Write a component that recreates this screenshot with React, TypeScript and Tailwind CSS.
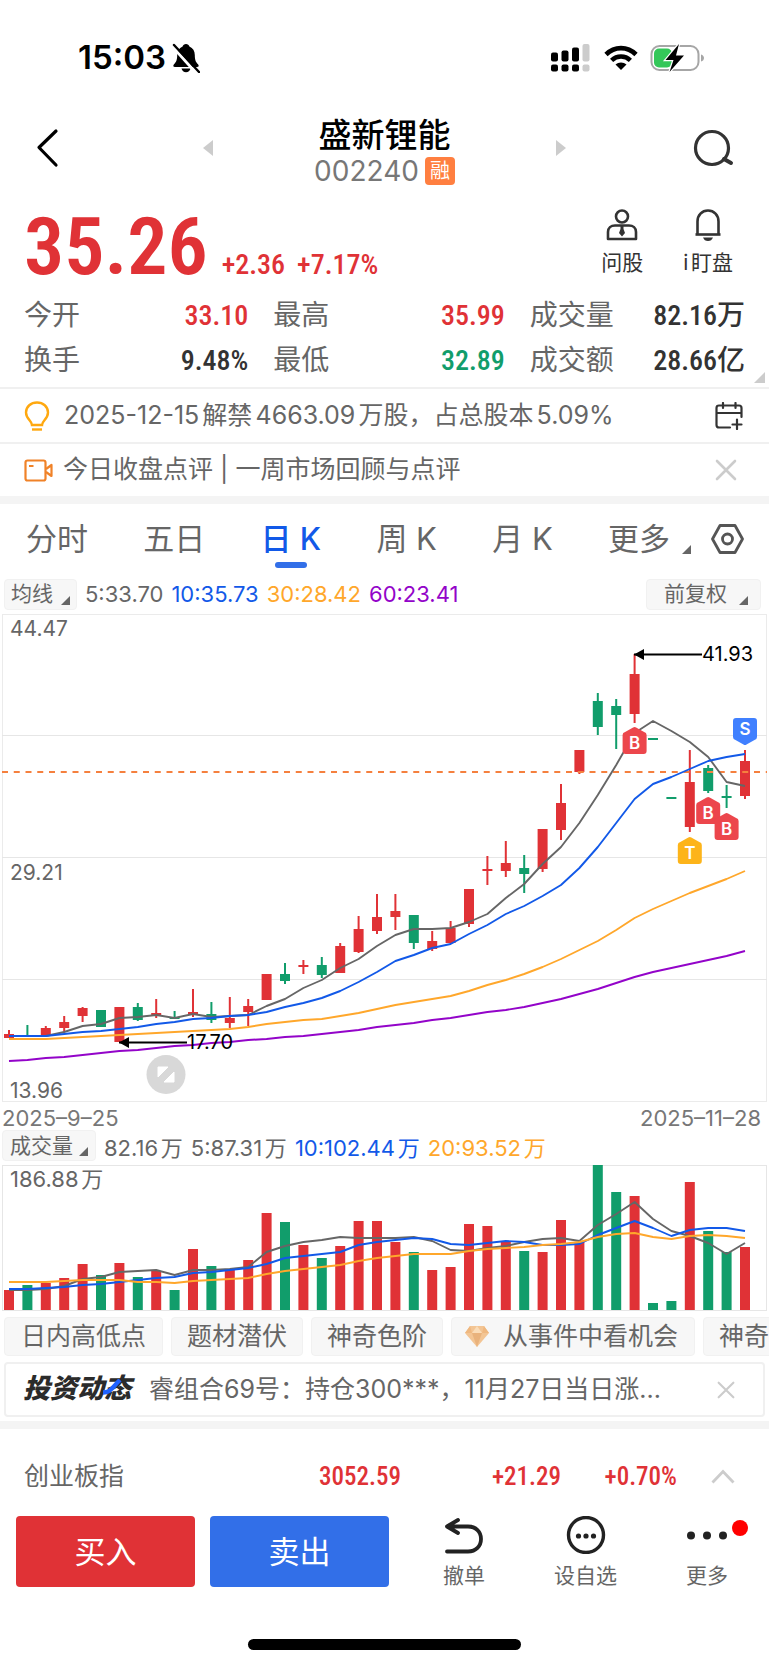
import React from 'react';

const RED = '#e03236';
const GREEN = '#119d6b';
const BLUE = '#1259e8';
const ORANGE = '#ffa72b';
const PURPLE = '#9304c9';
const GRAY = '#666666';

// [direction, high, body top, body bottom, low, volume top]
type Candle = [1 | -1, number, number, number, number, number];

const candles: Candle[] = [
  [1, 416, 420, 424, 424, 125],
  [-1, 411, 421, 422, 422, 120],
  [1, 412, 414, 422, 422, 118],
  [1, 402, 408, 414, 418, 113],
  [1, 393, 394, 402, 408, 99],
  [-1, 396, 396, 413, 413, 110],
  [1, 393, 393, 428, 428, 98],
  [-1, 389, 393, 406, 407, 112],
  [1, 385, 399, 402, 404, 106],
  [-1, 397, 403, 405, 405, 125],
  [1, 375, 398, 401, 403, 84],
  [-1, 388, 400, 406, 409, 101],
  [1, 383, 404, 409, 414, 104],
  [1, 385, 392, 398, 412, 95],
  [1, 360, 360, 386, 386, 48],
  [-1, 349, 360, 367, 370, 57],
  [1, 346, 351, 353, 360, 80],
  [-1, 343, 351, 361, 364, 93],
  [1, 329, 332, 359, 359, 81],
  [1, 302, 315, 338, 339, 56],
  [1, 280, 303, 317, 320, 56],
  [1, 280, 297, 303, 316, 77],
  [-1, 301, 301, 329, 335, 87],
  [1, 317, 327, 335, 337, 105],
  [1, 307, 314, 329, 329, 102],
  [1, 275, 275, 310, 313, 59],
  [1, 242, 255, 257, 271, 61],
  [1, 227, 249, 257, 263, 77],
  [-1, 241, 254, 260, 279, 86],
  [1, 215, 215, 255, 258, 87],
  [1, 170, 189, 216, 226, 55],
  [1, 136, 136, 158, 160, 77],
  [-1, 79, 87, 113, 121, 0],
  [-1, 85, 92, 101, 135, 27],
  [1, 40, 60, 100, 109, 31],
  [-1, 124, 124, 126, 126, 138],
  [-1, 183, 183, 185, 185, 136],
  [1, 136, 168, 213, 218, 17],
  [-1, 151, 154, 177, 179, 66],
  [-1, 171, 182, 184, 194, 87],
  [1, 136, 147, 182, 185, 82],
];

const ma5 = [422, 422, 422, 418, 412, 410, 404, 403, 401, 404, 400, 403, 402, 401, 392, 385, 374, 366, 354, 345, 332, 321, 315, 315, 314, 308, 300, 284, 270, 250, 233, 209, 181, 151, 119, 107, 117, 128, 143, 168, 172];
const ma10 = [422, 422, 422, 420, 418, 417, 415, 413, 410, 408, 405, 404, 402, 401, 398, 393, 389, 384, 377, 368, 358, 347, 341, 334, 330, 320, 311, 300, 292, 282, 271, 254, 233, 209, 185, 170, 163, 155, 147, 143, 140];
const ma30 = [425, 425, 425, 424, 423, 422, 421, 420, 419, 418, 417, 416, 415, 413, 410, 408, 406, 405, 402, 399, 395, 391, 388, 385, 382, 377, 371, 366, 360, 353, 345, 336, 327, 316, 304, 295, 287, 279, 272, 265, 257];
const ma60 = [447, 446, 444, 443, 441, 439, 437, 436, 434, 432, 431, 429, 428, 426, 425, 423, 422, 420, 418, 416, 413, 411, 409, 406, 404, 401, 398, 396, 393, 389, 385, 380, 375, 369, 363, 358, 354, 350, 346, 342, 337];

const vol5 = [125, 125, 124, 121, 114, 112, 107, 106, 105, 110, 105, 105, 104, 102, 87, 81, 77, 75, 72, 73, 73, 73, 72, 76, 85, 86, 83, 81, 77, 74, 73, 76, 60, 49, 37, 54, 66, 71, 78, 89, 78];
const vol10 = [124, 124, 123, 122, 120, 119, 117, 115, 113, 112, 108, 107, 105, 103, 99, 93, 91, 89, 87, 80, 77, 75, 73, 74, 79, 80, 78, 76, 77, 80, 80, 79, 70, 63, 56, 63, 71, 65, 63, 63, 66];
const vol20 = [117, 117, 117, 116, 115, 115, 115, 117, 117, 118, 116, 115, 114, 113, 109, 106, 104, 102, 100, 96, 93, 91, 89, 89, 89, 86, 84, 83, 82, 80, 79, 77, 72, 69, 68, 72, 74, 71, 70, 71, 73];

const xAt = (i: number) => 7 + i * 18.4;
const line = (ys: number[]) => ys.map((y, i) => `${xAt(i).toFixed(1)},${y}`).join(' ');

const Corner = () => (
  <svg width="9" height="9" viewBox="0 0 9 9" className="mb-1 shrink-0 self-end" fill="#666">
    <path d="M9 0V9H0Z" />
  </svg>
);

const Close = ({ size }: { size: number }) => (
  <svg width={size} height={size} viewBox="0 0 22 22" stroke="#ccc" strokeWidth="2.6" strokeLinecap="round">
    <path d="M2 2L20 20M20 2L2 20" />
  </svg>
);

const Tag = ({ i, y, letter, color, down }: { i: number; y: number; letter: string; color: string; down?: boolean }) => (
  <g transform={`translate(${xAt(i)} ${y})`}>
    <path
      d={down
        ? 'M-9 0H9Q12 0 12 3V19Q12 21.500 9.500 22L1.500 26.500Q0 27.500 -1.500 26.500L-9.500 22Q-12 21.500 -12 19V3Q-12 0 -9 0Z'
        : 'M-9 27H9Q12 27 12 24V8Q12 5.500 9.500 5L1.500 .5Q0 -.5 -1.500 .5L-9.500 5Q-12 5.500 -12 8V24Q-12 27 -9 27Z'}
      fill={color}
    />
    <text y={down ? 17 : 22} textAnchor="middle" fontSize="17" fontWeight="600" fill="#fff">{letter}</text>
  </g>
);

const StatusBar = () => (
  <div className="flex h-[115px] items-center pl-[78px] pr-16">
    <span className="text-[33px] font-semibold leading-none text-black">15:03</span>
    <svg className="ml-1.5" width="28" height="30" viewBox="0 0 28 30">
      <path d="M14 1c-1.700 0-3 1.100-3.400 2.500C7 5 5.200 8 5.200 12c0 5-1 7-3.200 9.200C.8 22.500 1.200 24 3 24h22c1.800 0 2.200-1.500 1-2.800C23.800 19 22.800 17 22.800 12c0-4-1.800-7-5.400-8.500C17 2.100 15.700 1 14 1Z" fill="#000" />
      <path d="M9.500 25.500h9c-.6 2.300-2.300 3.700-4.500 3.700s-3.900-1.400-4.500-3.700Z" fill="#000" />
      <path d="M1 4L25 31" stroke="#fff" strokeWidth="3" />
      <path d="M2 2L27 29" stroke="#000" strokeWidth="2.400" strokeLinecap="round" />
    </svg>
    <svg className="ml-auto" width="39" height="28" viewBox="0 0 39 28">
      <g fill="#000">
        <rect x="0" y="8.500" width="7" height="9" rx="2" />
        <rect x="10.500" y="6.500" width="7" height="11" rx="2" />
        <rect x="21" y="3.500" width="7" height="14" rx="2" />
        <rect x="0" y="20.500" width="7" height="7" rx="2" />
        <rect x="10.500" y="20.500" width="7" height="7" rx="2" />
        <rect x="21" y="20.500" width="7" height="7" rx="2" />
      </g>
      <g fill="#ccc">
        <rect x="31.500" y="0" width="7" height="17.500" rx="2" />
        <rect x="31.500" y="20.500" width="7" height="7" rx="2" />
      </g>
    </svg>
    <svg className="ml-3.5" width="34" height="26" viewBox="0 0 34 26" fill="none" stroke="#000" strokeWidth="4.600">
      <path d="M2 9.500C10.500 1 23.500 1 32 9.500" />
      <path d="M7.600 15.300C13 10.200 21 10.200 26.400 15.300" />
      <path d="M17 25L11.500 19.500C14.500 16.800 19.500 16.800 22.500 19.500Z" fill="#000" stroke="none" />
    </svg>
    <svg className="ml-3" width="55" height="28" viewBox="0 0 55 28">
      <rect x="1.500" y="2" width="47" height="24" rx="8" fill="none" stroke="#a6a6a6" strokeWidth="2" />
      <path d="M51 10.500c2 .5 3 2 3 3.500s-1 3-3 3.500Z" fill="#a6a6a6" />
      <rect x="4" y="4.500" width="18" height="19" rx="5" fill="#34c759" />
      <path d="M29 0L15.500 16h8L19.500 28L34 11.500H26Z" fill="#000" stroke="#fff" strokeWidth="2.400" paintOrder="stroke" />
    </svg>
  </div>
);

const Header = () => (
  <header className="flex h-[66px] items-center justify-between px-9">
    <button aria-label="返回" className="w-10">
      <svg width="24" height="40" viewBox="0 0 24 40" fill="none" stroke="#000" strokeWidth="3.200" strokeLinecap="round" strokeLinejoin="round">
        <path d="M20 3L3 19.500L20 37" />
      </svg>
    </button>
    <div className="flex items-center gap-[101px]">
      <button aria-label="上一只">
        <svg width="10" height="16" viewBox="0 0 10 16" fill="#ccc"><path d="M10 0V16L0 8Z" /></svg>
      </button>
      <div className="flex flex-col items-center pt-1.5">
        <h1 className="text-[33px] font-medium leading-[40px] text-black">盛新锂能</h1>
        <div className="flex items-center gap-1.5 leading-8">
          <span className="text-[28px] leading-8 text-[#777]">002240</span>
          <span className="rounded bg-[#ff7f40] px-[5px] text-[20px] leading-7 text-white">融</span>
        </div>
      </div>
      <button aria-label="下一只">
        <svg width="10" height="16" viewBox="0 0 10 16" fill="#ccc"><path d="M0 0V16L10 8Z" /></svg>
      </button>
    </div>
    <button aria-label="搜索" className="w-10">
      <svg width="42" height="38" viewBox="0 0 42 38" fill="none" stroke="#333" strokeWidth="3.200" strokeLinecap="round">
        <circle cx="19" cy="19" r="16.500" />
        <path d="M31 30L38 34" strokeWidth="4" />
      </svg>
    </button>
  </header>
);

const stats = [
  ['今开', '33.10', 'text-[#e03236]'],
  ['最高', '35.99', 'text-[#e03236]'],
  ['成交量', '82.16万', 'text-[#333]'],
  ['换手', '9.48%', 'text-[#333]'],
  ['最低', '32.89', 'text-[#119d6b]'],
  ['成交额', '28.66亿', 'text-[#333]'],
];

const NARROW = "font-['Roboto_Condensed','Roboto','Noto_Sans_CJK_SC',sans-serif]";

const Quote = () => (
  <section className="relative h-[206px] px-6 pt-[23px]">
    <div className="flex h-[89px] justify-between">
      <div className={`flex items-baseline font-medium text-[#e03236] ${NARROW}`}>
        <span className="text-[80px] font-semibold leading-[86px]">35.26</span>
        <span className="ml-3.5 text-[28px]">+2.36</span>
        <span className="ml-3 text-[28px]">+7.17%</span>
      </div>
      <div className="flex gap-10 pr-3 pt-[5px] text-[21px] leading-7 text-[#333]">
        <button className="flex flex-col items-center gap-2">
          <svg width="32" height="32" viewBox="0 0 32 32" fill="none" stroke="#333" strokeWidth="2.600">
            <circle cx="16" cy="7.500" r="6" />
            <path d="M2 30V23C2 19 5 16.500 9 16.500H23C27 16.500 30 19 30 23V30Z" strokeLinejoin="round" />
            <path d="M14.500 17h3v3l1.500 4l-3 3.500l-3-3.500l1.500-4Z" fill="#333" stroke="none" />
          </svg>
          <span>问股</span>
        </button>
        <button className="flex flex-col items-center gap-2">
          <svg width="28" height="32" viewBox="0 0 28 32" fill="none" stroke="#333" strokeWidth="2.600">
            <path d="M3.500 25V12.500C3.500 6 8 1.500 14 1.500S24.500 6 24.500 12.500V25" />
            <path d="M1.500 25.500H26.500" />
            <path d="M9 28.500H19C18 31 16.500 32 14 32S10 31 9 28.500Z" fill="#333" stroke="none" />
          </svg>
          <span className="[text-autospace:normal]">i盯盘</span>
        </button>
      </div>
    </div>
    <dl className="grid grid-cols-[224fr_231fr_215fr] gap-x-[25px] leading-[45px]">
      {stats.map(([label, value, color]) => (
        <div key={label} className="flex justify-between">
          <dt className="text-[28px] text-[#666]">{label}</dt>
          <dd className={`text-[28px] font-medium ${NARROW} ${color}`}>{value}</dd>
        </div>
      ))}
    </dl>
    <svg className="absolute bottom-1 right-1" width="11" height="11" viewBox="0 0 11 11" fill="#ccc"><path d="M11 0V11H0Z" /></svg>
  </section>
);

const Notices = () => (
  <section className="border-b-8 border-[#f4f4f4] text-[25px] text-[#666]">
    <div className="flex h-[55px] items-center border-t-2 border-[#f0f0f0] pl-6 pr-[26px]">
      <svg width="26" height="30" viewBox="0 0 26 30" fill="none" stroke="#ffa80f" strokeWidth="2.400">
        <path d="M8 24C8 20 2 18 2 11.500C2 5.500 7 1.500 13 1.500S24 5.500 24 11.500C24 18 18 20 18 24Z" />
        <path d="M8 28.500H18" />
      </svg>
      <span className="ml-3.5 flex-1 [text-autospace:normal]">2025-12-15解禁4663.09万股，占总股本5.09%</span>
      <button aria-label="添加日程">
        <svg width="28" height="28" viewBox="0 0 28 28" fill="none" stroke="#333" strokeWidth="2.200" strokeLinecap="round">
          <path d="M15 25.500H4Q1.500 25.500 1.500 23V6Q1.500 3.500 4 3.500H24Q26.500 3.500 26.500 6V15M1.500 11H26.500M8 1V6M20.500 1V6M22 17.500V27M17.500 22.500H26.500" />
        </svg>
      </button>
    </div>
    <div className="flex h-[54px] items-center border-t-2 border-[#f0f0f0] pl-6 pr-8">
      <svg width="29" height="23" viewBox="0 0 29 23" fill="none" stroke="#f08228" strokeWidth="2.200" strokeLinejoin="round">
        <rect x="1.500" y="1.500" width="20" height="20" rx="2" />
        <path d="M22 10L27.500 6V17L22 13M5 7H9.500" />
      </svg>
      <span className="ml-2.5 flex-1">今日收盘点评 | 一周市场回顾与点评</span>
      <button aria-label="关闭"><Close size={22} /></button>
    </div>
  </section>
);

const tabs = ['分时', '五日', '日K', '周K', '月K'];

const Tabs = () => (
  <nav className="flex h-[74px] items-center justify-between pb-1 pl-[26px] pr-[25px] text-[31px] text-[#666]">
    {tabs.map((tab) => (
      <button key={tab} className={tab === '日K' ? 'relative font-medium text-[#1259e8]' : ''}>
        {tab.replace('K', ' K')}
        {tab === '日K' && <span className="absolute -bottom-1.5 left-1/2 h-1.5 w-8 -translate-x-1/2 rounded-full bg-[#326fe8]" />}
      </button>
    ))}
    <div className="flex items-center gap-5">
      <button className="flex gap-3">更多<span className="flex pb-1"><Corner /></span></button>
      <button aria-label="设置">
        <svg width="33" height="30" viewBox="0 0 33 30" fill="none" stroke="#555" strokeWidth="2.800" strokeLinejoin="round">
          <path d="M9 1.500H24L31.500 15L24 28.500H9L1.500 15Z" />
          <circle cx="16.500" cy="15" r="5" />
        </svg>
      </button>
    </div>
  </nav>
);

const chip = 'flex items-center rounded border border-[#f1f1f1] bg-[#f7f7f7] text-[#666]';

const PriceChart = () => (
  <section>
    <div className="flex h-9 items-center gap-2 pb-1 pl-1 pr-2 text-[22px] leading-7">
      <button className={`${chip} h-[31px] gap-2 px-1.5 text-[21px]`}>均线<Corner /></button>
      <span className="text-[#666]">5:33.70</span>
      <span className="text-[#1259e8]">10:35.73</span>
      <span className="text-[#ffa72b]">30:28.42</span>
      <span className="text-[#9304c9]">60:23.41</span>
      <button className={`${chip} ml-auto h-[31px] gap-3 pl-[17px] pr-3 text-[21px]`}>前复权<Corner /></button>
    </div>
    <svg viewBox="0 0 765 488" className="mx-auto block w-[calc(100%-4px)]">
      <rect x=".5" y=".5" width="764" height="487" fill="none" stroke="#ebebeb" />
      <path d="M0 121.500H765M0 243.500H765M0 365.500H765" stroke="#e6e6e6" />
      {candles.map(([dir, high, top, bottom, low], i) => (
        <g key={i} fill={dir > 0 ? RED : GREEN}>
          <rect x={xAt(i) - 1} y={high} width="2" height={low - high} />
          <rect x={xAt(i) - 5} y={top} width="10" height={bottom - top} />
        </g>
      ))}
      <path d="M0 158H765" stroke="#f5803e" strokeWidth="1.800" strokeDasharray="6 5.750" />
      <g fill="none" strokeWidth="1.900" strokeLinejoin="round">
        <polyline points={line(ma60)} stroke={PURPLE} />
        <polyline points={line(ma30)} stroke={ORANGE} />
        <polyline points={line(ma5)} stroke={GRAY} />
        <polyline points={line(ma10)} stroke={BLUE} />
      </g>
      <g fill={GRAY} fontSize="21">
        <text x="8" y="22">44.47</text>
        <text x="8" y="266">29.21</text>
        <text x="8" y="484">13.96</text>
      </g>
      <path d="M632 40.500H700M117 428.500H185" stroke="#000" strokeWidth="2" />
      <path d="M632 40.500l10-5.500v11ZM117 428.500l10-5.500v11Z" fill="#000" />
      <text x="700" y="47" fontSize="20">41.93</text>
      <text x="185" y="435" fontSize="20">17.70</text>
      <Tag i={34} y={113} letter="B" color="#ec464c" />
      <Tag i={38} y={183} letter="B" color="#ec464c" />
      <Tag i={39} y={199} letter="B" color="#ec464c" />
      <Tag i={37} y={223} letter="T" color="#fdb41a" />
      <Tag i={40} y={104} letter="S" color="#4080ff" down />
      <circle cx="164" cy="460.500" r="19.500" fill="#d8d8d8" />
      <path d="M156 453H166L156 463ZM172 458V468H162Z" fill="#fff" stroke="#fff" strokeLinejoin="round" />
    </svg>
    <div className="flex h-7 justify-between pl-0.5 pr-2 text-[22px] leading-8 text-[#777]">
      <span>2025–9–25</span>
      <span>2025–11–28</span>
    </div>
  </section>
);

const VolumeChart = () => (
  <section>
    <div className="flex h-[35px] gap-2 pl-0.5 text-[22px] leading-9 [text-autospace:normal]">
      <button className={`${chip} h-[31px] gap-1.5 px-[7px] text-[21px]`}>成交量<Corner /></button>
      <span className="text-[#666]">82.16万</span>
      <span className="text-[#666]">5:87.31万</span>
      <span className="text-[#1259e8]">10:102.44万</span>
      <span className="text-[#ffa72b]">20:93.52万</span>
    </div>
    <svg viewBox="0 0 765 146" className="mx-auto block w-[calc(100%-4px)]">
      <rect x=".5" y=".5" width="764" height="145" fill="none" stroke="#e6e6e6" />
      {candles.map(([dir, , , , , top], i) => (
        <rect key={i} x={xAt(i) - 5} y={top} width="10" height={145 - top} fill={dir > 0 ? RED : GREEN} />
      ))}
      <g fill="none" strokeWidth="1.900" strokeLinejoin="round">
        <polyline points={line(vol5)} stroke={GRAY} />
        <polyline points={line(vol10)} stroke={BLUE} />
        <polyline points={line(vol20)} stroke={ORANGE} />
      </g>
      <text x="8" y="22" fontSize="22" fill={GRAY} className="[text-autospace:normal]">186.88万</text>
    </svg>
  </section>
);

const Promos = () => (
  <section className="border-b-8 border-[#f4f4f4] text-[25px] text-[#666]">
    <div className="flex gap-2 overflow-hidden whitespace-nowrap pl-1 pt-1.5">
      <button className={`${chip} h-[39px] shrink-0 px-4`}>日内高低点</button>
      <button className={`${chip} h-[39px] shrink-0 px-[15px]`}>题材潜伏</button>
      <button className={`${chip} h-[39px] shrink-0 px-[15px]`}>神奇色阶</button>
      <button className={`${chip} h-[39px] shrink-0 gap-3.5 pl-[13px] pr-4`}>
        <svg width="24" height="21" viewBox="0 0 24 21">
          <path d="M5 0H19L24 7L12 21L0 7Z" fill="#f3c594" />
          <path d="M5 0L7 7H0ZM19 0L17 7H24Z" fill="#efb880" />
          <path d="M7 7H17L12 21Z" fill="#e9b27c" />
          <path d="M7 7L12 0L17 7Z" fill="#fadcb8" />
        </svg>
        从事件中看机会
      </button>
      <button className={`${chip} h-[39px] shrink-0 pl-[15px] pr-16`}>神奇</button>
    </div>
    <div className="mx-1 mb-1 mt-1.5 flex h-[55px] items-center rounded border-2 border-[#f0f0f0] pl-[17px] pr-7">
      <span className="relative text-[27px] font-black italic text-[#2b2b2b]">
        投资动态
        <svg className="absolute left-20 top-2.5" width="20" height="17" viewBox="0 0 20 17" fill="none">
          <path d="M0 13.500C8 13.500 9.500 8 17 1" stroke="#1e62ff" strokeWidth="4.400" />
        </svg>
      </span>
      <span className="ml-[18px] flex-1 whitespace-nowrap">睿组合69号：持仓300***，11月27日当日涨...</span>
      <button aria-label="关闭"><Close size={18} /></button>
    </div>
  </section>
);

const IndexRow = () => (
  <section className="flex h-[87px] items-center px-6 pt-2 text-[25px] text-[#666]">
    <span className="flex-1">创业板指</span>
    <div className={`flex text-right font-medium text-[#e03236] ${NARROW}`}>
      <span className="w-40">3052.59</span>
      <span className="w-40">+21.29</span>
      <span className="w-[116px]">+0.70%</span>
    </div>
    <button aria-label="展开" className="ml-[34px] mr-2.5">
      <svg width="24" height="15" viewBox="0 0 24 15" fill="none" stroke="#ccc" strokeWidth="2.800"><path d="M1.500 13.500L12 2.500L22.500 13.500" /></svg>
    </button>
  </section>
);

const ActionBar = () => (
  <footer className="flex px-4 text-[21px] leading-7 text-[#666]">
    <div className="flex w-[373px] gap-[15px] text-[31px] text-white">
      <button className="h-[71px] flex-1 rounded bg-[#e03236]">买入</button>
      <button className="h-[71px] flex-1 rounded bg-[#326fe8]">卖出</button>
    </div>
    <div className="flex flex-1 justify-between pl-[54px] pr-[25px]">
      <button className="flex flex-col items-center gap-2">
        <svg width="40" height="38" viewBox="0 0 40 38" fill="none" stroke="#222" strokeWidth="3.800" strokeLinecap="round" strokeLinejoin="round">
          <path d="M14 4L3 10.500L14 17M4 10.500H24C32 10.500 37 16 37 23S32 35.500 24 35.500H3" />
        </svg>
        撤单
      </button>
      <button className="flex flex-col items-center gap-2">
        <svg width="40" height="38" viewBox="0 0 40 38" fill="#222">
          <circle cx="20" cy="19" r="17.500" fill="none" stroke="#222" strokeWidth="3.400" />
          <circle cx="12.500" cy="20" r="2.600" /><circle cx="20" cy="20" r="2.600" /><circle cx="27.500" cy="20" r="2.600" />
        </svg>
        设自选
      </button>
      <button className="relative flex flex-col items-center gap-2">
        <svg width="40" height="38" viewBox="0 0 40 38" fill="#222">
          <circle cx="4" cy="19.500" r="4" /><circle cx="20" cy="19.500" r="4" /><circle cx="36" cy="19.500" r="4" />
        </svg>
        更多
        <span className="absolute -right-5 top-1 size-4 rounded-full bg-[#ff0000]" />
      </button>
    </div>
  </footer>
);

export default function App() {
  return (
    <main className="min-h-screen overflow-hidden bg-white font-['Inter','Noto_Sans_CJK_SC',sans-serif]">
      <StatusBar />
      <Header />
      <Quote />
      <Notices />
      <Tabs />
      <PriceChart />
      <VolumeChart />
      <Promos />
      <IndexRow />
      <ActionBar />
      <div className="mx-auto mb-[15px] mt-[49px] h-[11px] w-[273px] rounded-full bg-black" />
    </main>
  );
}
